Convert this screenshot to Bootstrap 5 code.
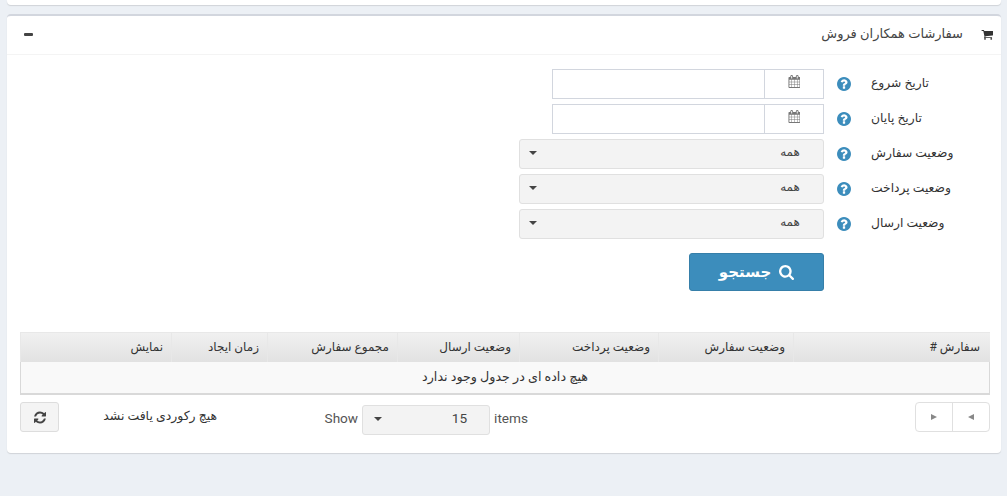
<!DOCTYPE html>
<html lang="fa" dir="rtl">
<head>
<meta charset="utf-8">
<title>سفارشات همکاران فروش</title>
<link href="https://cdn.jsdelivr.net/npm/bootstrap@5.3.0/dist/css/bootstrap.min.css" rel="stylesheet">
<style>
html,body{height:496px;overflow:hidden}
body{background:#ecf0f5;color:#333;font:13px/18px Roboto,"DejaVu Sans",sans-serif;padding:0 6px 0 7px}
.strip{height:5px;background:#fff;border-radius:0 0 4px 4px;box-shadow:0 1px 1px rgba(0,0,0,.12);margin-bottom:9px}
.panel{height:439px;background:#fff;border-top:2px solid #d2d6de;border-radius:4px;box-shadow:0 1px 1px rgba(0,0,0,.12)}
.panel-head{height:39px;border-bottom:1px solid #f4f4f4;padding:0 8px 2px 17px}
.head-title{color:#444;font-size:13px;margin-right:18px}
.ico{fill:currentColor;display:block;flex:none}
.panel-body{padding:14px 11px 0}
.frow{height:30px;margin-bottom:5px}
.flabel{width:119px;text-align:left;line-height:28px;color:#333;font-size:12.3px}
.fhelp{width:47px;color:#3c8dbc;padding-right:20px}
.fdate{width:272px;height:30px;border:1px solid #d2d6de}
.fdate-add{width:59px;border-left:1px solid #d2d6de;color:#777;padding-bottom:5px}
.fdate-in{flex:1}
.fsel{width:305px;height:30px;border:1px solid #e0e0e0;border-radius:3px;background:#f3f3f3;font-size:12px;padding:0 12px 4px 9px;color:#444}
.fsel-text{width:42px;flex:none}
.tri{width:0;height:0;border-left:4px solid transparent;border-right:4px solid transparent;border-top:4px solid #444;margin-top:2px}
.search-btn{width:135px;height:38px;margin-top:14px;background:#3c8dbc;border:1px solid #367fa9;border-radius:3px;color:#fff;font-size:15px;font-weight:700;gap:8px;padding:0;margin-right:166px}
.search-btn:hover{background:#3c8dbc;color:#fff}
.grid-wrap{margin-top:41px;margin-bottom:0;border-collapse:separate;border-spacing:0;width:970px;table-layout:fixed;color:#333;font-size:12px;--bs-table-bg:transparent}
.grid-wrap th{height:30px;padding:0 8px 2px 8px;font-weight:400;text-align:right;background:linear-gradient(#f0f0f0,#e2e2e2);border:1px solid #e8e8e8;border-width:1px 0 0 1px;vertical-align:middle}
.grid-wrap th:first-child{padding-right:10px}
.grid-wrap td{height:33px;padding:0 0 2px;text-align:center;background:#f9f9f9;border:1px solid #d9d9d9;border-width:0 1px 2px;vertical-align:middle;font-size:12.7px}
.foot{height:38px;margin-top:7px;width:970px}
.pgr{width:75px;height:30px;border:1px solid #e0e0e0;border-radius:4px}
.pgr span{flex:1;border-left:1px solid #e0e0e0}
.pgr span:last-child{border-left:0}
.tl{width:0;height:0;border-top:3px solid transparent;border-bottom:3px solid transparent}
.tl-a{border-left:6px solid #888}
.tl-b{border-right:6px solid #888}
.show-part{width:203px;font-size:13.6px;color:#555;margin-right:387px;margin-top:3px;gap:4px}
.show-word{padding-bottom:4px}
.show-sel{width:128px;height:30px;flex:none;border:1px solid #e0e0e0;border-radius:3px;background:#f3f3f3;padding:0 22px 4px 11px;color:#444}
.count-text{width:113px;margin-right:108px;line-height:27px;color:#333;white-space:nowrap;font-size:12.45px}
.refresh{width:39px;height:30px;border:1px solid #ddd;border-radius:3px;background:#f4f4f4;color:#444;margin-right:45px}
</style>
</head>
<body>
<svg width="0" height="0" class="position-absolute">
<symbol id="i-q" viewBox="0 0 1536 1536"><path transform="translate(-128 -128)" d="M1024 1376v-192q0-14-9-23t-23-9h-192q-14 0-23 9t-9 23v192q0 14 9 23t23 9h192q14 0 23-9t9-23zm256-672q0-88-55.5-163t-138.5-116-170-41q-243 0-371 213-15 24 8 42l132 100q7 6 19 6 16 0 25-12 53-68 86-92 34-24 86-24 48 0 85.5 26t37.5 59q0 38-20 61t-68 45q-63 28-115.5 86.5t-52.5 125.5v36q0 14 9 23t23 9h192q14 0 23-9t9-23q0-19 21.5-49.5t54.5-49.5q32-18 49-28.5t46-35 44.5-48 28-60.5 12.5-81zm384 192q0 209-103 385.5t-279.5 279.5-385.5 103-385.5-103-279.5-279.5-103-385.5 103-385.5 279.5-279.5 385.5-103 385.5 103 279.5 279.5 103 385.5z"/></symbol>
<symbol id="i-c" viewBox="0 0 1664 1792"><path d="M192 1664h288v-288h-288v288zm352 0h320v-288h-320v288zm-352-352h288v-320h-288v320zm352 0h320v-320h-320v320zm-352-384h288v-288h-288v288zm736 736h320v-288h-320v288zm-384-736h320v-288h-320v288zm768 736h288v-288h-288v288zm-384-352h320v-320h-320v320zm-352-864v-288q0-13-9.5-22.5t-22.5-9.5h-64q-13 0-22.5 9.5t-9.5 22.5v288q0 13 9.5 22.5t22.5 9.5h64q13 0 22.5-9.5t9.5-22.5zm736 864h288v-320h-288v320zm-384-384h320v-288h-320v288zm384 0h288v-288h-288v288zm32-480v-288q0-13-9.5-22.5t-22.5-9.5h-64q-13 0-22.5 9.5t-9.5 22.5v288q0 13 9.5 22.5t22.5 9.5h64q13 0 22.5-9.5t9.5-22.5zm384-64v1280q0 52-38 90t-90 38h-1408q-52 0-90-38t-38-90v-1280q0-52 38-90t90-38h128v-96q0-66 47-113t113-47h64q66 0 113 47t47 113v96h384v-96q0-66 47-113t113-47h64q66 0 113 47t47 113v96h128q52 0 90 38t38 90z"/></symbol>
</svg>
<div class="strip"></div>
<section class="panel">
  <header class="panel-head d-flex align-items-center">
    <svg class="ico" width="12" height="11" viewBox="0 128 1728 1536" aria-hidden="true"><path d="M704 1536q0 52-38 90t-90 38-90-38-38-90 38-90 90-38 90 38 38 90zm896 0q0 52-38 90t-90 38-90-38-38-90 38-90 90-38 90 38 38 90zm128-1088v512q0 24-16.5 42.5t-40.5 21.5l-1044 122q13 60 13 70 0 16-24 64h920q26 0 45 19t19 45-19 45-45 19h-1024q-26 0-45-19t-19-45q0-11 8-31.5t16-36 21.5-40 15.5-29.5l-177-823h-204q-26 0-45-19t-19-45 19-45 45-19h256q16 0 28.5 6.5t19.5 15.5 13 24.5 8 26 5.5 29.5 4.5 26h1201q26 0 45 19t19 45z"/></svg>
    <span class="head-title">سفارشات همکاران فروش</span>
    <svg class="ico me-auto" width="9" height="3" viewBox="0 0 9 3" aria-hidden="true"><rect width="9" height="3" rx="1" fill="#444"/></svg>
  </header>
  <div class="panel-body">
    <div class="frow d-flex">
      <div class="flabel">تاریخ شروع</div>
      <div class="fhelp d-flex align-items-center"><svg class="ico" width="14" height="14"><use href="#i-q"/></svg></div>
      <div class="fdate d-flex"><div class="fdate-add d-flex align-items-center justify-content-center"><svg class="ico" width="12" height="13"><use href="#i-c"/></svg></div><div class="fdate-in"></div></div>
    </div>
    <div class="frow d-flex">
      <div class="flabel">تاریخ پایان</div>
      <div class="fhelp d-flex align-items-center"><svg class="ico" width="14" height="14"><use href="#i-q"/></svg></div>
      <div class="fdate d-flex"><div class="fdate-add d-flex align-items-center justify-content-center"><svg class="ico" width="12" height="13"><use href="#i-c"/></svg></div><div class="fdate-in"></div></div>
    </div>
    <div class="frow d-flex">
      <div class="flabel">وضعیت سفارش</div>
      <div class="fhelp d-flex align-items-center"><svg class="ico" width="14" height="14"><use href="#i-q"/></svg></div>
      <div class="fsel d-flex align-items-center"><span class="fsel-text text-center">همه</span><span class="tri me-auto"></span></div>
    </div>
    <div class="frow d-flex">
      <div class="flabel">وضعیت پرداخت</div>
      <div class="fhelp d-flex align-items-center"><svg class="ico" width="14" height="14"><use href="#i-q"/></svg></div>
      <div class="fsel d-flex align-items-center"><span class="fsel-text text-center">همه</span><span class="tri me-auto"></span></div>
    </div>
    <div class="frow d-flex">
      <div class="flabel">وضعیت ارسال</div>
      <div class="fhelp d-flex align-items-center"><svg class="ico" width="14" height="14"><use href="#i-q"/></svg></div>
      <div class="fsel d-flex align-items-center"><span class="fsel-text text-center">همه</span><span class="tri me-auto"></span></div>
    </div>
    <button type="button" class="btn search-btn d-flex align-items-center justify-content-center">
      <svg class="ico" width="15" height="15" viewBox="0 0 1664 1664" aria-hidden="true"><path d="M1152 704q0-185-131.5-316.5t-316.5-131.5-316.5 131.5-131.5 316.5 131.5 316.5 316.5 131.5 316.5-131.5 131.5-316.5zm512 832q0 52-38 90t-90 38q-54 0-90-38l-343-342q-179 124-399 124-143 0-273.5-55.5t-225-150-150-225-55.5-273.5 55.5-273.5 150-225 225-150 273.5-55.5 273.5 55.5 225 150 150 225 55.5 273.5q0 220-124 399l343 343q37 37 37 90z"/></svg>
      <span>جستجو</span>
    </button>
    <table class="table grid-wrap">
      <colgroup><col style="width:197px"><col style="width:135px"><col style="width:139px"><col style="width:122px"><col style="width:130px"><col style="width:96px"><col style="width:151px"></colgroup>
      <thead><tr><th>سفارش #</th><th>وضعیت سفارش</th><th>وضعیت پرداخت</th><th>وضعیت ارسال</th><th>مجموع سفارش</th><th>زمان ایجاد</th><th>نمایش</th></tr></thead>
      <tbody><tr><td colspan="7">هیچ داده ای در جدول وجود ندارد</td></tr></tbody>
    </table>
    <div class="foot d-flex align-items-start">
      <div class="pgr d-flex">
        <span class="d-flex align-items-center justify-content-center"><i class="tl tl-b"></i></span>
        <span class="d-flex align-items-center justify-content-center"><i class="tl tl-a"></i></span>
      </div>
      <div class="show-part d-flex align-items-center">
        <span class="show-word">items</span>
        <div class="show-sel d-flex align-items-center"><span>15</span><span class="tri me-auto"></span></div>
        <span class="show-word">Show</span>
      </div>
      <div class="count-text">هیچ رکوردی یافت نشد</div>
      <div class="refresh d-flex align-items-center justify-content-center">
        <svg class="ico" width="13" height="13" viewBox="0 0 1664 1664" aria-hidden="true"><path transform="translate(0 -64)" d="M1639 1056q0 5-1 7-64 268-268 434.5t-478 166.5q-146 0-282.5-55t-243.5-157l-129 129q-19 19-45 19t-45-19-19-45v-448q0-26 19-45t45-19h448q26 0 45 19t19 45-19 45l-137 137q71 66 161 102t187 36q134 0 250-65t186-179q11-17 53-117 8-23 30-23h192q13 0 22.5 9.5t9.5 22.5zm25-800v448q0 26-19 45t-45 19h-448q-26 0-45-19t-19-45 19-45l138-138q-148-137-349-137-134 0-250 65t-186 179q-11 17-53 117-8 23-30 23h-199q-13 0-22.5-9.5t-9.5-22.5v-7q65-268 270-434.5t480-166.5q146 0 284 55.5t245 156.5l130-129q19-19 45-19t45 19 19 45z"/></svg>
      </div>
    </div>
  </div>
</section>
</body>
</html>
